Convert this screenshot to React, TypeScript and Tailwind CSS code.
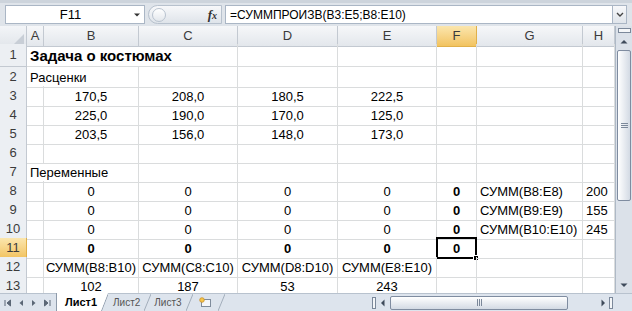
import React from "react";

type C = { t?: string; span?: number; left?: boolean; b?: boolean; big?: boolean; sel?: boolean };

const e: C = {};
const n = (t: string, b = false): C => ({ t, b });
const g = (t: string): C => ({ t, left: true });

const rows: { h: string; cells: C[] }[] = [
  { h: "h-[23px]", cells: [{ t: "Задача о костюмах", span: 3, left: true, b: true, big: true }, e, e, e, e, e] },
  { h: "h-[19px]", cells: [{ t: "Расценки", span: 2, left: true }, e, e, e, e, e, e] },
  { h: "h-[19px]", cells: [e, n("170,5"), n("208,0"), n("180,5"), n("222,5"), e, e, e] },
  { h: "h-[19px]", cells: [e, n("225,0"), n("190,0"), n("170,0"), n("125,0"), e, e, e] },
  { h: "h-[19px]", cells: [e, n("203,5"), n("156,0"), n("148,0"), n("173,0"), e, e, e] },
  { h: "h-[19px]", cells: [e, e, e, e, e, e, e, e] },
  { h: "h-[19px]", cells: [{ t: "Переменные", span: 2, left: true }, e, e, e, e, e, e] },
  { h: "h-[19px]", cells: [e, n("0"), n("0"), n("0"), n("0"), n("0", true), g("СУММ(B8:E8)"), g("200")] },
  { h: "h-[19px]", cells: [e, n("0"), n("0"), n("0"), n("0"), n("0", true), g("СУММ(B9:E9)"), g("155")] },
  { h: "h-[19px]", cells: [e, n("0"), n("0"), n("0"), n("0"), n("0", true), g("СУММ(B10:E10)"), g("245")] },
  { h: "h-[19px]", cells: [e, n("0", true), n("0", true), n("0", true), n("0", true), { t: "0", b: true, sel: true }, e, e] },
  { h: "h-[19px]", cells: [e, n("СУММ(B8:B10)"), n("СУММ(C8:C10)"), n("СУММ(D8:D10)"), n("СУММ(E8:E10)"), e, e, e] },
  { h: "h-[19px]", cells: [e, n("102"), n("187"), n("53"), n("243"), e, e, e] },
];

const colLetters = ["A", "B", "C", "D", "E", "F", "G", "H"];
const grid = "grid w-[615px] grid-cols-[27px_17px_95px_99px_100px_99px_40px_106px_32px]";

function Cell({ c }: { c: C }) {
  const span = c.span === 3 ? "col-span-3" : c.span === 2 ? "col-span-2" : "";
  return (
    <div
      className={`${span} relative flex items-center whitespace-nowrap border-r border-b border-[#dadcdd] ${
        c.left ? "justify-start pl-[3px]" : "justify-center"
      } ${c.b ? "font-bold" : ""} ${c.big ? "text-[15px]" : "text-[13px]"}`}
    >
      <span className="leading-none pt-[1px]">{c.t}</span>
      {c.sel && (
        <>
          <div className="absolute -left-[1px] -top-[1px] -right-[1px] -bottom-[1px] border-2 border-black" />
          <div className="absolute -right-[3px] -bottom-[3px] w-[6px] h-[6px] bg-black border border-white" />
        </>
      )}
    </div>
  );
}

function Arrow({ dir }: { dir: "up" | "down" | "left" | "right" }) {
  const p = {
    up: "M0.5 5.5 L4 2 L7.5 5.5 Z",
    down: "M0.5 2.5 L4 6 L7.5 2.5 Z",
    left: "M5.5 0.5 L2 4 L5.5 7.5 Z",
    right: "M2.5 0.5 L6 4 L2.5 7.5 Z",
  }[dir];
  return (
    <svg width="8" height="8" viewBox="0 0 8 8">
      <path d={p} fill="#3f4b5b" />
    </svg>
  );
}

export default function App() {
  return (
    <div className="w-[632px] h-[311px] overflow-hidden flex flex-col bg-white text-black [font-family:'Liberation_Sans',Arial,sans-serif]">
      {/* formula bar */}
      <div className="h-[26px] shrink-0 flex items-center gap-[3px] px-[5px] bg-[#dfe4ea] border-t-[3px] border-[#cdd4dc]">
        <div className="w-[140px] h-[19px] bg-white border border-[#aab6c5] flex items-center">
          <span className="flex-1 text-center text-[13px] pl-[2px]">F11</span>
          <svg width="8" height="8" viewBox="0 0 8 8" className="mr-[3px]">
            <path d="M1 2.5 L4 5.5 L7 2.5 Z" fill="#333" />
          </svg>
        </div>
        <div className="w-[74px] h-[19px] rounded-l-full border border-[#b7c1cd] bg-linear-to-b from-[#f7f8fa] to-[#dfe4ea] flex items-center pl-[3px]">
          <div className="w-[14px] h-[14px] rounded-full border border-[#b9c3cf] bg-linear-to-b from-white to-[#e3e7ec]" />
          <span className="ml-auto mr-[4px] italic font-bold text-[13px] text-[#333] [font-family:'Liberation_Serif',serif]">
            f<span className="text-[10px]">x</span>
          </span>
        </div>
        <div className="flex-1 h-[19px] bg-white border border-[#aab6c5] flex items-center pl-[4px] text-[12px]">
          =СУММПРОИЗВ(B3:E5;B8:E10)
        </div>
        <div className="-ml-[4px] w-[15px] h-[19px] bg-linear-to-b from-[#f7f8fa] to-[#e0e5eb] border border-[#aab6c5] flex items-center justify-center">
          <svg width="8" height="6" viewBox="0 0 8 6">
            <path d="M1 1 L4 4 L7 1" stroke="#444" strokeWidth="1.4" fill="none" />
          </svg>
        </div>
      </div>

      {/* sheet */}
      <div className="flex h-[267px] shrink-0">
        <div className="w-[615px] shrink-0 overflow-hidden">
          <div className={`${grid} h-[18px]`}>
            <div className="bg-linear-to-b from-[#f3f5f8] to-[#e2e6eb] border-r border-b border-[#c3c9d1] flex items-end justify-end pr-[2px] pb-[2px]">
              <svg width="10" height="10" viewBox="0 0 10 10">
                <path d="M10 0 L10 10 L0 10 Z" fill="#c8ced6" />
              </svg>
            </div>
            {colLetters.map((l) => (
              <div
                key={l}
                className={`flex items-center justify-center text-[13px] border-r border-b text-[#3b3b3b] ${
                  l === "F"
                    ? "bg-linear-to-b from-[#fbe6ad] to-[#f2c35f] border-[#e0b04a]"
                    : "bg-linear-to-b from-[#f6f7f9] to-[#e3e7ec] border-[#c3c9d1]"
                }`}
              >
                {l}
              </div>
            ))}
          </div>
          {rows.map((r, i) => (
            <div key={i} className={`${grid} ${r.h}`}>
              <div
                className={`flex items-center justify-center text-[13px] text-[#3b3b3b] border-r border-b ${
                  i === 10
                    ? "bg-linear-to-b from-[#fbe6ad] to-[#f2c35f] border-[#e0b04a]"
                    : "bg-[#eceff3] border-[#c3c9d1]"
                }`}
              >
                {i + 1}
              </div>
              {r.cells.map((c, j) => (
                <Cell key={j} c={c} />
              ))}
            </div>
          ))}
        </div>

        {/* vertical scrollbar */}
        <div className="w-[17px] shrink-0 bg-[#dbe1e9] border-l border-[#aeb9c6] flex flex-col items-center">
          <div className="mt-[2px] w-[13px] h-[5px] border border-[#7b889a] bg-[#f4f6f8]" />
          <div className="h-[14px] flex items-center justify-center mt-[2px]">
            <Arrow dir="up" />
          </div>
          <div className="mt-[1px] w-[14px] h-[151px] rounded-[2px] border border-[#7f8ca0] bg-linear-to-r from-white to-[#d3dae4] flex flex-col items-center justify-center gap-[1px]">
            <div className="w-[7px] h-[1px] bg-[#7b889a]" />
            <div className="w-[7px] h-[1px] bg-[#7b889a]" />
            <div className="w-[7px] h-[1px] bg-[#7b889a]" />
          </div>
          <div className="flex-1" />
          <div className="h-[14px] flex items-center justify-center mb-[1px]">
            <Arrow dir="down" />
          </div>
        </div>
      </div>

      {/* sheet tabs */}
      <div className="h-[18px] shrink-0 flex items-stretch bg-[#dde4ed] border-t border-[#b8c2ce]">
        <div className="w-[56px] shrink-0 flex items-center gap-[5px] pl-[4px]">
          <svg width="8" height="8" viewBox="0 0 8 8"><path d="M1 1 V7 M6.5 1 L3 4 L6.5 7 Z" stroke="#5b6776" fill="#5b6776" strokeWidth="1" /></svg>
          <svg width="8" height="8" viewBox="0 0 8 8"><path d="M6 1 L2.5 4 L6 7 Z" fill="#5b6776" /></svg>
          <svg width="8" height="8" viewBox="0 0 8 8"><path d="M2 1 L5.5 4 L2 7 Z" fill="#5b6776" /></svg>
          <svg width="8" height="8" viewBox="0 0 8 8"><path d="M7 1 V7 M1.5 1 L5 4 L1.5 7 Z" stroke="#5b6776" fill="#5b6776" strokeWidth="1" /></svg>
        </div>
        <div className="w-[316px] shrink-0 flex items-stretch">
          <div className="w-[52px] -mt-[1px] bg-white border-l border-[#8e9bab] [clip-path:polygon(0_0,100%_0,calc(100%_-_7px)_100%,0_100%)] flex items-center pl-[8px] text-[11px] font-bold">
            Лист1
          </div>
          <svg width="8" height="18" viewBox="0 0 8 18" className="-ml-[8px]"><path d="M1 18 L8 0" stroke="#8e9bab" /></svg>
          <div className="flex items-center pl-[5px] pr-[4px] text-[10px] text-[#555]">Лист2</div>
          <svg width="7" height="18" viewBox="0 0 7 18"><path d="M0 17 L7 0" stroke="#a3aebb" /></svg>
          <div className="flex items-center pl-[3px] pr-[4px] text-[10px] text-[#555]">Лист3</div>
          <svg width="7" height="18" viewBox="0 0 7 18"><path d="M0 17 L7 0" stroke="#a3aebb" /></svg>
          <div className="flex items-center px-[6px]">
            <svg width="13" height="11" viewBox="0 0 13 11">
              <rect x="2.5" y="2.5" width="9" height="7" fill="#f5f7fa" stroke="#7f8c9c" />
              <circle cx="3" cy="3" r="2.3" fill="#f7c64a" stroke="#c9902a" strokeWidth="0.8" />
            </svg>
          </div>
          <svg width="7" height="18" viewBox="0 0 7 18"><path d="M0 17 L7 0" stroke="#a3aebb" /></svg>
        </div>
        {/* horizontal scrollbar */}
        <div className="w-[243px] shrink-0 flex items-center">
          <div className="w-[4px] h-[12px] border border-[#7b889a] bg-[#f4f6f8]" />
          <div className="w-[14px] flex justify-center">
            <Arrow dir="left" />
          </div>
          <div className="w-[178px] h-[14px] rounded-[2px] border border-[#7f8ca0] bg-linear-to-b from-white to-[#d3dae4] flex items-center justify-center gap-[1px]">
            <div className="w-[1px] h-[7px] bg-[#7b889a]" />
            <div className="w-[1px] h-[7px] bg-[#7b889a]" />
            <div className="w-[1px] h-[7px] bg-[#7b889a]" />
          </div>
          <div className="flex-1" />
          <div className="w-[12px] flex justify-center">
            <Arrow dir="right" />
          </div>
          <div className="w-[4px] h-[12px] border border-[#7b889a] bg-[#f4f6f8] mr-[2px]" />
        </div>
        <div className="w-[17px] shrink-0 bg-[#dde4ed]" />
      </div>
    </div>
  );
}
